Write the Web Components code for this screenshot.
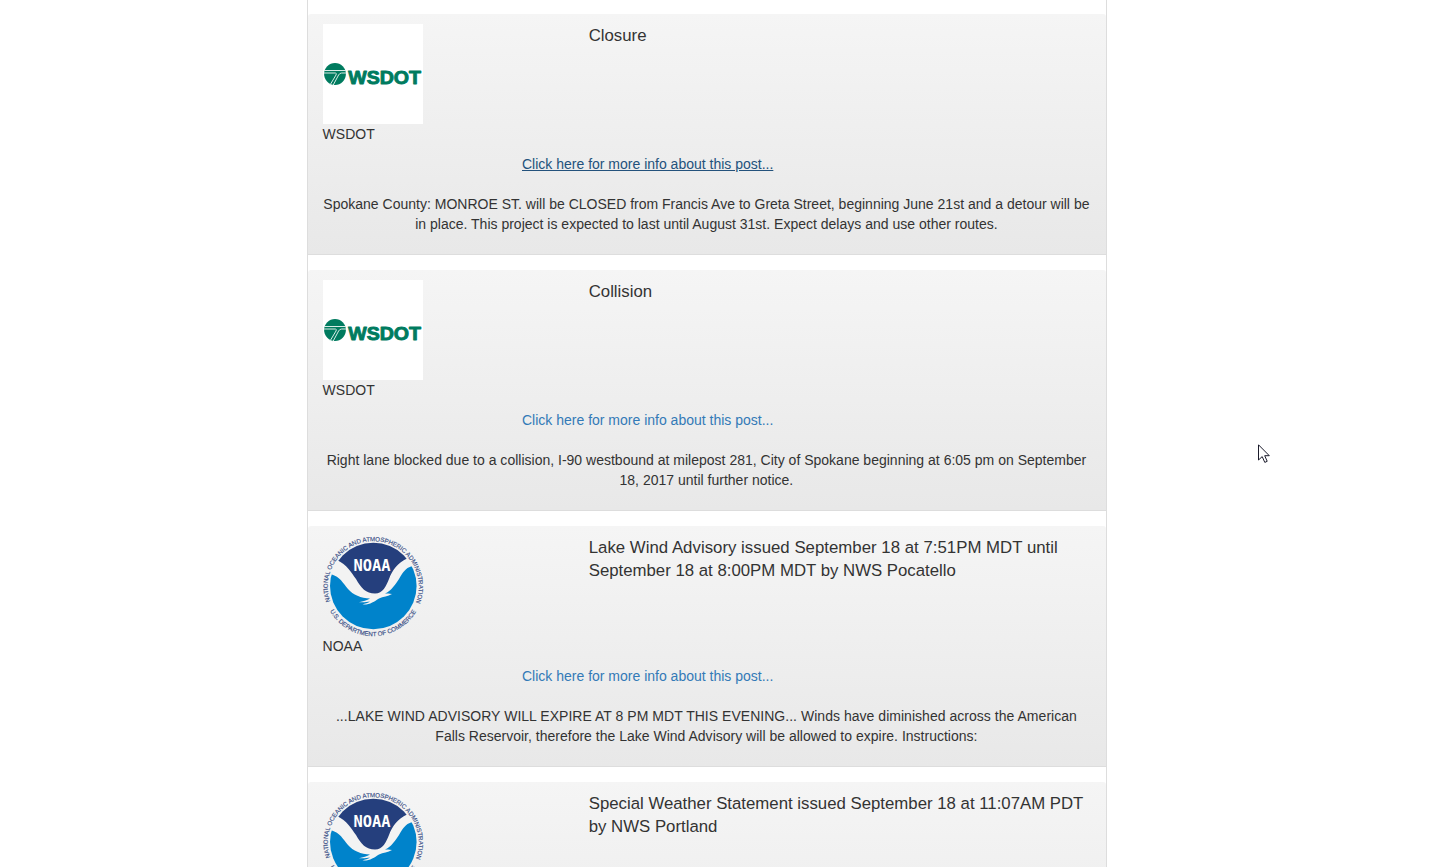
<!DOCTYPE html>
<html lang="en">
<head>
<meta charset="utf-8">
<title>Alerts</title>
<style>
html, body { margin: 0; height: 867px; overflow: hidden; background: #fff; }
body { font: 14px/20px "Liberation Sans", Arial, sans-serif; color: #333; }
</style>
</head>
<body>
<alert-feed>
  <alert-post source="WSDOT" active>
    <wsdot-logo slot="logo"></wsdot-logo>
    <span slot="title">Closure</span>
    Spokane County: MONROE ST. will be CLOSED from Francis Ave to Greta Street, beginning June 21st and a detour will be<br>in place. This project is expected to last until August 31st. Expect delays and use other routes.
  </alert-post>
  <alert-post source="WSDOT">
    <wsdot-logo slot="logo"></wsdot-logo>
    <span slot="title">Collision</span>
    Right lane blocked due to a collision, I-90 westbound at milepost 281, City of Spokane beginning at 6:05 pm on September<br>18, 2017 until further notice.
  </alert-post>
  <alert-post source="NOAA">
    <noaa-logo slot="logo"></noaa-logo>
    <span slot="title"><span style="letter-spacing:.02px">Lake Wind Advisory issued September 18 at 7:51PM MDT until</span><br>September 18 at 8:00PM MDT by NWS Pocatello</span>
    <span style="letter-spacing:.03px">...LAKE WIND ADVISORY WILL EXPIRE AT 8 PM MDT THIS EVENING... Winds have diminished across the American</span><br>Falls Reservoir, therefore the Lake Wind Advisory will be allowed to expire. Instructions:
  </alert-post>
  <alert-post source="NOAA">
    <noaa-logo slot="logo"></noaa-logo>
    <span slot="title">Special Weather Statement issued September 18 at 11:07AM PDT<br>by NWS Portland</span>
  </alert-post>
</alert-feed>
<mouse-pointer></mouse-pointer>
<script>
const define = (name, html, setup) => customElements.define(name, class extends HTMLElement {
  constructor() {
    super();
    this.attachShadow({ mode: "open" }).innerHTML = html;
  }
  connectedCallback() { if (setup) setup(this, this.shadowRoot); }
});

define("alert-feed", `
<style>
:host { display: flex; flex-direction: column; gap: 15px; box-sizing: border-box; width: 800px; height: 867px; margin-left: 307px; padding-top: 14px; border: solid #ddd; border-width: 0 1px; overflow: hidden; }
</style><slot></slot>`);

define("alert-post", `
<style>
:host { display: block; box-sizing: border-box; flex: none; height: 241px; padding: 10px 15px 20px; border-bottom: 1px solid #ddd; border-radius: 3px 3px 0 0; background: linear-gradient(#f5f5f5, #e8e8e8); }
.head { display: grid; grid-template-columns: 265.7px 1fr; height: 120px; }
.title { font-size: 16.8px; line-height: 23px; white-space: nowrap; }
.source { height: 20px; margin-left: -.4px; }
.more { display: block; width: max-content; margin: 10px 0 20px 199px; color: #337ab7; text-decoration: none; white-space: nowrap; }
:host([active]) .more { color: #23527c; text-decoration: underline; }
.body { margin: 0 .6px 0 -.6px; text-align: center; white-space: nowrap; letter-spacing: .006px; }
</style>
<div class="head">
  <div><slot name="logo"></slot><div class="source"></div></div>
  <div class="title"><slot name="title"></slot></div>
</div>
<a class="more" href="#">Click here for more info about this post...</a>
<div class="body"><slot></slot></div>`, (el, root) => {
  root.querySelector(".source").textContent = el.getAttribute("source");
});

define("wsdot-logo", `
<style>:host { display: block; width: 100px; height: 100px; background: #fff; } svg { display: block; }</style>
<svg width="100" height="100" viewBox="0 0 100 100">
  <circle cx="12" cy="50" r="10.9" fill="#007b5f"/>
  <g fill="none" stroke="#d8ece6" stroke-width="1">
    <path d="M1 46.5H23M1 49H12.4Q14 49.2 13 51L7 61M23 49H18.6Q16.6 49.1 15.6 51L10 61.4"/>
  </g>
  <text x="25.2" y="59.8" textLength="72.8" lengthAdjust="spacingAndGlyphs" font-family="Liberation Sans, Arial, sans-serif" font-size="18" font-weight="700" fill="#007b5f" stroke="#007b5f" stroke-width=".9" stroke-linejoin="round">WSDOT</text>
</svg>`);

define("noaa-logo", `
<style>:host { display: block; width: 100px; height: 100px; } svg { display: block; overflow: visible; }</style>
<svg width="100" height="100" viewBox="0 0 100 100">
  <defs>
    <clipPath id="disc"><circle cx="50.3" cy="50" r="43.3"/></clipPath>
    <path id="upper" d="M7.2 65.4A45.5 45.5 0 1 1 93.3 65.4"/>
    <path id="lower" d="M7 74.9A49.7 49.7 0 0 0 94 74"/>
  </defs>
  <g clip-path="url(#disc)">
    <path fill="#f3f3f3" d="M0 0H100V100H0Z"/>
    <path fill="#253f7d" d="M0 0L14 24C24 29 28 36 33 43C38 52 43 57.5 52 57.5C60 57.5 63 50 66 43C69 34 75 27 84 22.5L100 0Z"/>
    <path fill="#0083cb" d="M0 36L8.3 38.3C17 41 20 47 25 53C30 59 38 62 47 62.6C44 64.5 40 65.5 36 66.2C41 66.6 44 66 47 65.6C45 67 42 67.7 39.5 68.5C47 69 51 65.6 56 62.5C60 60.5 65 60.5 69 58C66 57.6 64 57.8 62 57.6C68 55 72 49 76 43C80 36 83 32 88 30.5L100 26V100H0Z"/>
  </g>
  <text x="30.5" y="35.2" textLength="37" lengthAdjust="spacingAndGlyphs" font-family="DejaVu Sans Mono, monospace" font-size="15.4" font-weight="700" fill="#fff">NOAA</text>
  <g font-family="Liberation Sans, Arial, sans-serif" font-size="6.2" fill="#3a4f87" stroke="#3a4f87" stroke-width=".15">
    <text textLength="174" lengthAdjust="spacingAndGlyphs"><textPath href="#upper" textLength="174" lengthAdjust="spacingAndGlyphs">NATIONAL OCEANIC AND ATMOSPHERIC ADMINISTRATION</textPath></text>
    <text textLength="104" lengthAdjust="spacingAndGlyphs"><textPath href="#lower" textLength="104" lengthAdjust="spacingAndGlyphs">U.S. DEPARTMENT OF COMMERCE</textPath></text>
  </g>
</svg>`);

define("mouse-pointer", `
<style>:host { position: absolute; left: 1258px; top: 444px; width: 12px; height: 20px; } svg { display: block; }</style>
<svg width="12" height="20" viewBox="0 0 12 20"><path d="M.5 .8V16L4.2 12.6L6.8 18.4L9.2 17.3L6.7 11.7H11.3Z" fill="#fff" stroke="#1b1b2b" stroke-width="1"/></svg>`);
</script>
</body>
</html>
